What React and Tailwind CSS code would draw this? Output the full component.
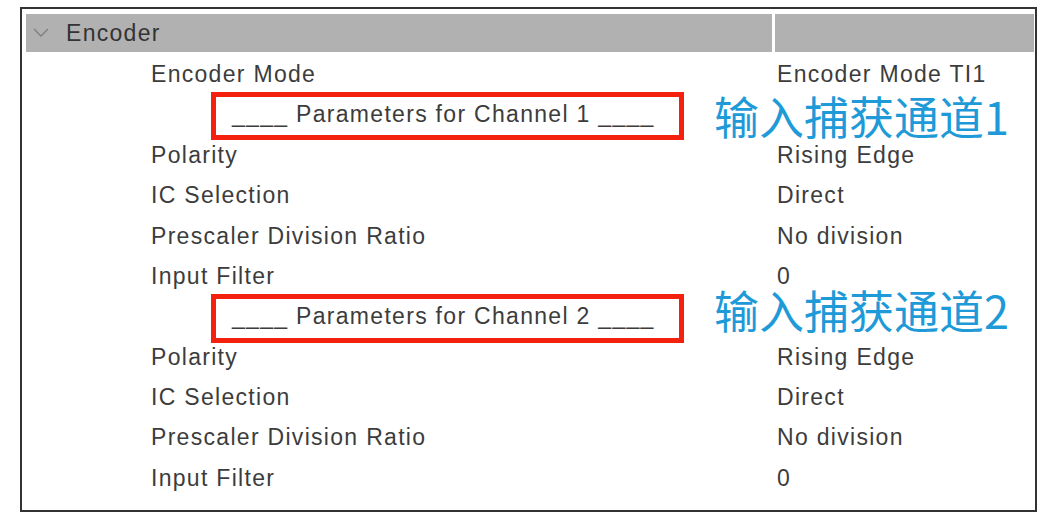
import React from "react";

const rows = [
  { label: "Encoder Mode", value: "Encoder Mode TI1" },
  { label: "____ Parameters for Channel 1 ____", value: "", sub: true },
  { label: "Polarity", value: "Rising Edge" },
  { label: "IC Selection", value: "Direct" },
  { label: "Prescaler Division Ratio", value: "No division" },
  { label: "Input Filter", value: "0" },
  { label: "____ Parameters for Channel 2 ____", value: "", sub: true },
  { label: "Polarity", value: "Rising Edge" },
  { label: "IC Selection", value: "Direct" },
  { label: "Prescaler Division Ratio", value: "No division" },
  { label: "Input Filter", value: "0" },
];

export default function App() {
  return (
    <div className="relative w-[1050px] h-[516px] bg-white overflow-hidden font-['Liberation_Sans'] text-[23px] tracking-[1.3px] text-[#3c3c3c]">
      <div className="ml-[20px] mt-[7px] w-[1017px] h-[505px] border-2 border-[#333333] pt-[5px] pl-[4px] pr-[1px]">
        <div className="flex h-[38px] gap-[3px]">
          <div className="w-[746px] bg-[#b1b1b1] flex items-center">
            <svg width="16" height="10" viewBox="0 0 16 10" className="ml-[7px]">
              <path d="M1 1 L8 8 L15 1" fill="none" stroke="#7f7f7f" strokeWidth="1.4" />
            </svg>
            <span className="ml-[17px] text-[#333333]">Encoder</span>
          </div>
          <div className="flex-1 bg-[#b1b1b1]" />
        </div>
        <div className="flex flex-col pt-[2px]">
          {rows.map((r, i) => (
            <div key={i} className="flex h-[40.4px] items-center gap-[3px]">
              <div className={`w-[746px] ${r.sub ? "pl-[206px]" : "pl-[125px]"} whitespace-pre`}>{r.label}</div>
              <div className="flex-1 pl-[2px] whitespace-pre">{r.value}</div>
            </div>
          ))}
        </div>
      </div>

      <div className="absolute left-[211px] top-[92px] w-[473px] h-[48px] border-[5px] border-[#f5210f]" />
      <div className="absolute left-[211px] top-[294px] w-[473px] h-[49px] border-[5px] border-[#f5210f]" />

      <div className="absolute left-[714px] top-[93px] leading-none tracking-normal text-[45px] text-[#1e9ad8] font-['Noto_Sans_CJK_SC']">输入捕获通道1</div>
      <div className="absolute left-[714px] top-[287px] leading-none tracking-normal text-[45px] text-[#1e9ad8] font-['Noto_Sans_CJK_SC']">输入捕获通道2</div>
    </div>
  );
}
